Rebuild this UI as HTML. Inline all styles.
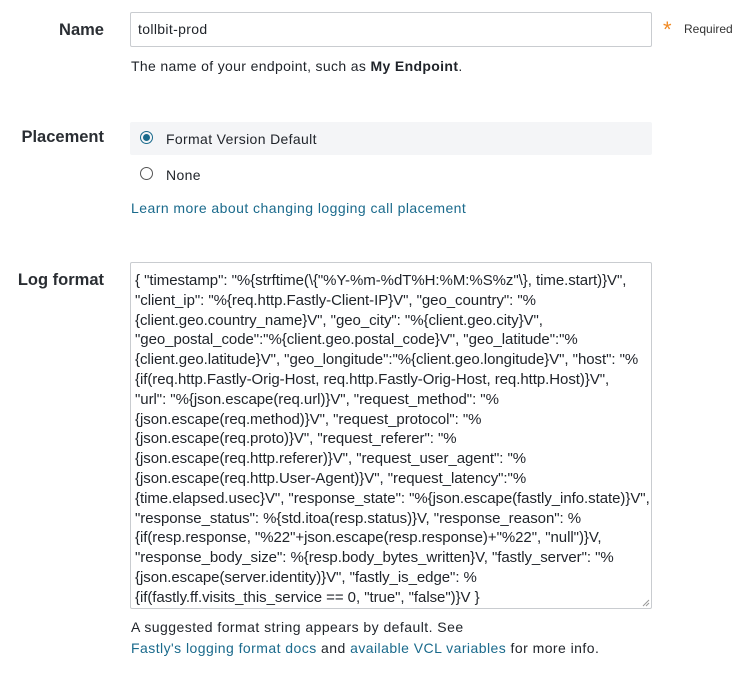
<!DOCTYPE html>
<html><head><meta charset="utf-8"><style>
body{margin:0;width:750px;height:685px;background:#fff;font-family:"Liberation Sans",sans-serif;color:#1f2329;position:relative;overflow:hidden}
.lbl{position:absolute;right:646px;font-weight:bold;font-size:16.5px;color:#2a2e33;white-space:nowrap}
.abs{position:absolute;white-space:nowrap}
.t{font-size:14px;letter-spacing:0.35px}
.input{position:absolute;left:130px;top:12px;width:522px;height:35px;border:1px solid #c9ccd0;border-radius:2px;box-sizing:border-box}
a{color:#1a6a8c;text-decoration:none}
.ta{position:absolute;left:130px;top:262px;width:522px;height:347px;border:1px solid #c9ccd0;border-radius:2px;box-sizing:border-box;overflow:hidden}
.ta div{position:absolute;left:4px;font-size:15px;white-space:nowrap;color:#1f2329;letter-spacing:-0.05px}
.radio{position:absolute;width:11px;height:11px;border:1px solid #555;border-radius:50%}
</style></head><body>
<div class="lbl" style="top:21px">Name</div>
<div class="input"></div>
<div class="abs t" style="left:138px;top:21px">tollbit-prod</div>
<div class="abs" style="left:663px;top:17px;font-size:22px;color:#f08a24">*</div>
<div class="abs" style="left:684px;top:22px;font-size:12px;color:#333">Required</div>
<div class="abs t" style="left:131px;top:58px">The name of your endpoint, such as <b>My Endpoint</b>.</div>

<div class="lbl" style="top:128px">Placement</div>
<div class="abs" style="left:130px;top:122px;width:522px;height:33px;background:#f4f5f7;border-radius:2px"></div>
<div class="radio" style="left:140px;top:131px;border-color:#1a6a8c"></div>
<div class="abs" style="left:143px;top:134px;width:7px;height:7px;border-radius:50%;background:#1a6a8c"></div>
<div class="abs t" style="left:166px;top:131px">Format Version Default</div>
<div class="radio" style="left:140px;top:167px"></div>
<div class="abs t" style="left:166px;top:167px">None</div>
<div class="abs t" style="left:131px;top:200px;letter-spacing:0.45px"><a>Learn more about changing logging call placement</a></div>

<div class="lbl" style="top:271px">Log format</div>
<div class="ta">
<div style="top:9px">{ "timestamp": "%{strftime(\{"%Y-%m-%dT%H:%M:%S%z"\}, time.start)}V",</div>
<div style="top:29px">"client_ip": "%{req.http.Fastly-Client-IP}V", "geo_country": "%</div>
<div style="top:49px">{client.geo.country_name}V", "geo_city": "%{client.geo.city}V",</div>
<div style="top:68px">"geo_postal_code":"%{client.geo.postal_code}V", "geo_latitude":"%</div>
<div style="top:88px">{client.geo.latitude}V", "geo_longitude":"%{client.geo.longitude}V", "host": "%</div>
<div style="top:108px">{if(req.http.Fastly-Orig-Host, req.http.Fastly-Orig-Host, req.http.Host)}V",</div>
<div style="top:128px">"url": "%{json.escape(req.url)}V", "request_method": "%</div>
<div style="top:148px">{json.escape(req.method)}V", "request_protocol": "%</div>
<div style="top:167px">{json.escape(req.proto)}V", "request_referer": "%</div>
<div style="top:187px">{json.escape(req.http.referer)}V", "request_user_agent": "%</div>
<div style="top:207px">{json.escape(req.http.User-Agent)}V", "request_latency":"%</div>
<div style="top:227px">{time.elapsed.usec}V", "response_state": "%{json.escape(fastly_info.state)}V",</div>
<div style="top:247px">"response_status": %{std.itoa(resp.status)}V, "response_reason": %</div>
<div style="top:266px">{if(resp.response, "%22"+json.escape(resp.response)+"%22", "null")}V,</div>
<div style="top:286px">"response_body_size": %{resp.body_bytes_written}V, "fastly_server": "%</div>
<div style="top:306px">{json.escape(server.identity)}V", "fastly_is_edge": %</div>
<div style="top:326px">{if(fastly.ff.visits_this_service == 0, "true", "false")}V }</div>
<svg style="position:absolute;right:1px;bottom:1px" width="8" height="8"><path d="M1 7L7 1M4 7L7 4" stroke="#999" stroke-width="1"/></svg>
</div>
<div class="abs t" style="left:131px;top:619px;letter-spacing:0.45px">A suggested format string appears by default. See</div>
<div class="abs t" style="left:131px;top:640px;letter-spacing:0.45px"><a>Fastly's logging format docs</a> and <a>available VCL variables</a> for more info.</div>
</body></html>
